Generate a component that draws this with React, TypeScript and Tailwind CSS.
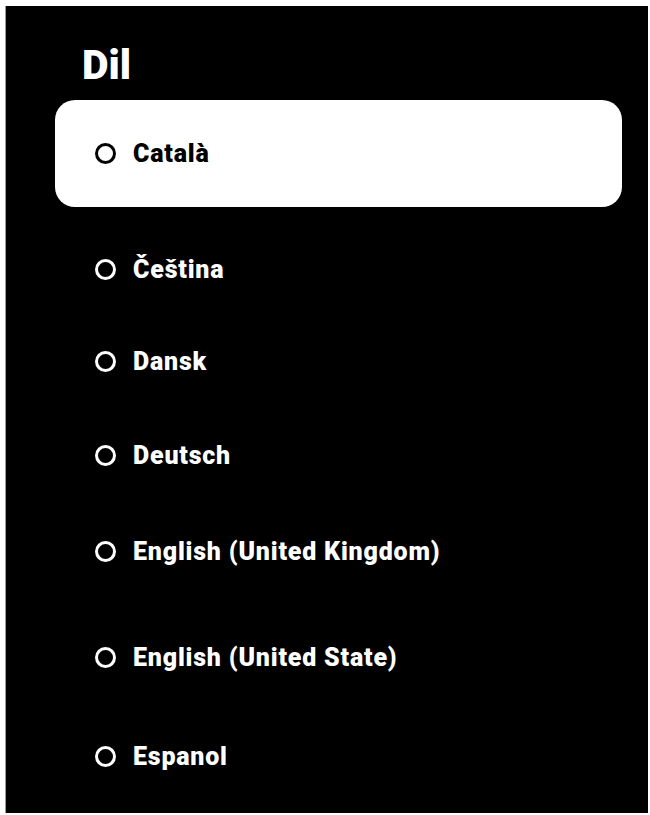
const languages = [
  { name: 'Català', mt: 'mt-0' },
  { name: 'Čeština', mt: 'mt-[42px]' },
  { name: 'Dansk', mt: 'mt-[52px]' },
  { name: 'Deutsch', mt: 'mt-[54px]' },
  { name: 'English (United Kingdom)', mt: 'mt-[56px]' },
  { name: 'English (United State)', mt: 'mt-[66px]' },
  { name: 'Espanol', mt: 'mt-[59px]' },
];

function Radio({ dark }: { dark: boolean }) {
  return (
    <span
      className={`block w-[21px] h-[21px] rounded-full border-[3.5px] shrink-0 ${
        dark ? 'border-black' : 'border-white'
      }`}
    />
  );
}

export default function App() {
  const selected = 0;

  return (
    <div className="w-[650px] h-[815px] bg-white pt-[6px] pl-[5px] font-['Roboto',sans-serif]">
      <div className="w-[643px] h-[807px] bg-black border-l border-[#9a9a9a] overflow-hidden">
        <h1 className="pl-[76px] pt-[34px] text-[41px] leading-[50px] font-black text-white">Dil</h1>

        <ul className="mt-[10px] pl-[49px]">
          {languages.map((lang, i) => {
            const active = i === selected;
            return (
              <li
                key={lang.name}
                className={`${lang.mt} flex items-center ${
                  active ? 'w-[567px] h-[107px] bg-white rounded-[20px]' : 'h-[40px]'
                }`}
              >
                <div className="flex items-center gap-[17px] pl-[40px]">
                  <Radio dark={active} />
                  <span
                    className={`text-[25px] leading-none font-black tracking-[0.8px] ${
                      active ? 'text-black' : 'text-white'
                    }`}
                  >
                    {lang.name}
                  </span>
                </div>
              </li>
            );
          })}
        </ul>
      </div>
    </div>
  );
}
